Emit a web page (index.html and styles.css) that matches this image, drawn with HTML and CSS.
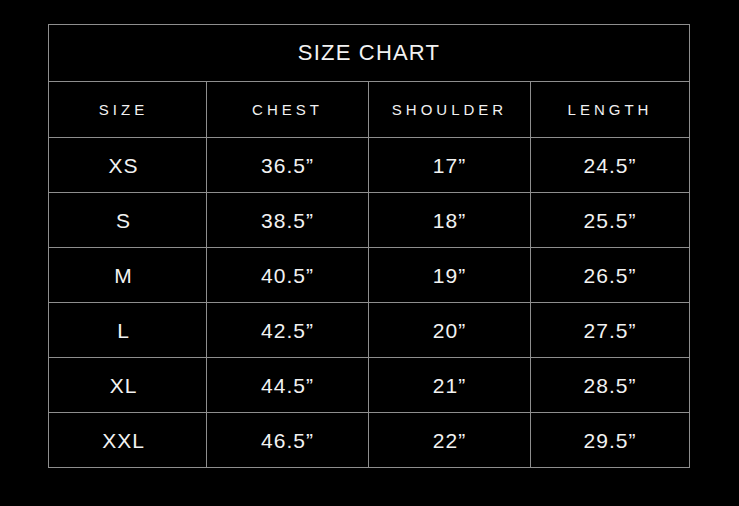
FILE: index.html
```html
<!DOCTYPE html>
<html>
<head>
<meta charset="utf-8">
<link rel="stylesheet" href="styles.css">
</head>
<body>
<table class="chart">
  <colgroup>
    <col class="c1"><col class="c2"><col class="c3"><col class="c4">
  </colgroup>
  <tr class="title-row"><td colspan="4" class="title">SIZE CHART</td></tr>
  <tr class="head-row">
    <td class="head first">SIZE</td><td class="head">CHEST</td><td class="head">SHOULDER</td><td class="head">LENGTH</td>
  </tr>
  <tr class="row"><td class="first">XS</td><td>36.5”</td><td>17”</td><td>24.5”</td></tr>
  <tr class="row"><td class="first">S</td><td>38.5”</td><td>18”</td><td>25.5”</td></tr>
  <tr class="row"><td class="first">M</td><td>40.5”</td><td>19”</td><td>26.5”</td></tr>
  <tr class="row"><td class="first">L</td><td>42.5”</td><td>20”</td><td>27.5”</td></tr>
  <tr class="row"><td class="first">XL</td><td>44.5”</td><td>21”</td><td>28.5”</td></tr>
  <tr class="row"><td class="first">XXL</td><td>46.5”</td><td>22”</td><td>29.5”</td></tr>
</table>
</body>
</html>
```

FILE: styles.css
```css
html, body {
  margin: 0;
  background: #000;
}
body {
  padding: 24px 0 0 48px;
  font-family: "Liberation Sans", Arial, sans-serif;
  color: #f2f2f2;
}
.chart {
  border-collapse: collapse;
  table-layout: fixed;
  width: 641px;
}
.c1 { width: 158px; }
.c2 { width: 162px; }
.c3 { width: 162px; }
.c4 { width: 159px; }
.chart td {
  border: 1px solid #8e8e8e;
  text-align: center;
  vertical-align: middle;
  padding: 0;
}
.title-row { height: 57px; }
.head-row { height: 56px; }
.row { height: 55px; }
.title {
  font-size: 22px;
  letter-spacing: 1.2px;
  padding: 2px 3px 0 0;
}
.head {
  font-size: 15px;
  letter-spacing: 4px;
}
.row td {
  font-size: 21px;
  letter-spacing: 1px;
  padding-top: 1px;
}
.chart td.first {
  padding-right: 8px;
}
```
